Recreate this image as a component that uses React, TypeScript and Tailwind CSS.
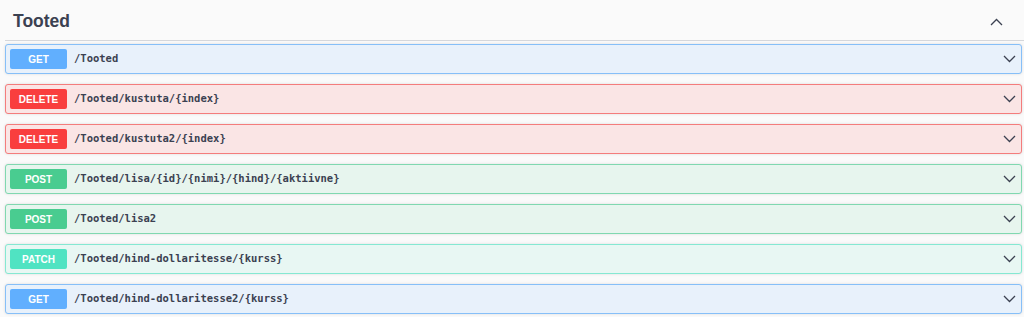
import React from "react";

type Op = { method: string; path: string };

const ops: Op[] = [
  { method: "GET", path: "/Tooted" },
  { method: "DELETE", path: "/Tooted/kustuta/{index}" },
  { method: "DELETE", path: "/Tooted/kustuta2/{index}" },
  { method: "POST", path: "/Tooted/lisa/{id}/{nimi}/{hind}/{aktiivne}" },
  { method: "POST", path: "/Tooted/lisa2" },
  { method: "PATCH", path: "/Tooted/hind-dollaritesse/{kurss}" },
  { method: "GET", path: "/Tooted/hind-dollaritesse2/{kurss}" },
];

const styles: Record<string, { box: string; badge: string }> = {
  GET: { box: "bg-[#e8f1fb] border-[#86bff8]", badge: "bg-[#61affe]" },
  DELETE: { box: "bg-[#fae5e5] border-[#f47c7c]", badge: "bg-[#f93e3e]" },
  POST: { box: "bg-[#e7f5ee] border-[#80d8b0]", badge: "bg-[#49cc90]" },
  PATCH: { box: "bg-[#e8f7f3] border-[#85e8d2]", badge: "bg-[#50e3c2]" },
};

const Chevron = ({ up = false }: { up?: boolean }) => (
  <svg width="13" height="8" viewBox="0 0 13 8" className="text-[#3b4151]">
    <polyline
      points={up ? "1,7 6.5,1.5 12,7" : "1,1 6.5,6.5 12,1"}
      fill="none"
      stroke="currentColor"
      strokeWidth="1.3"
    />
  </svg>
);

export default function App() {
  return (
    <div className="h-[317px] bg-[#fafafa] pl-[5px] font-['Liberation_Sans',sans-serif]">
      {/* tag header */}
      <div className="flex h-[41px] items-center justify-between border-b border-[#d5d7db] pt-[3px] pl-[8px] pr-[21px]">
        <span className="text-[17.5px] font-bold text-[#3b4151]">Tooted</span>
        <Chevron up />
      </div>
      <div className="mt-[3px] mr-[2px] flex flex-col gap-[10px]">
        {ops.map((op, i) => (
          <div
            key={i}
            className={`flex h-[30px] items-center rounded-[3px] border pl-[4px] pr-[5px] shadow-[0_0_3px_rgba(0,0,0,0.12)] ${styles[op.method].box}`}
          >
            <span
              className={`flex h-[20px] w-[57px] items-center justify-center rounded-[2px] text-[10px] font-bold text-white ${styles[op.method].badge}`}
            >
              {op.method}
            </span>
            <span className="ml-[7px] flex-1 font-['DejaVu_Sans_Mono',monospace] text-[10.5px] font-bold text-[#3b4151]">
              {op.path}
            </span>
            <Chevron />
          </div>
        ))}
      </div>
    </div>
  );
}
